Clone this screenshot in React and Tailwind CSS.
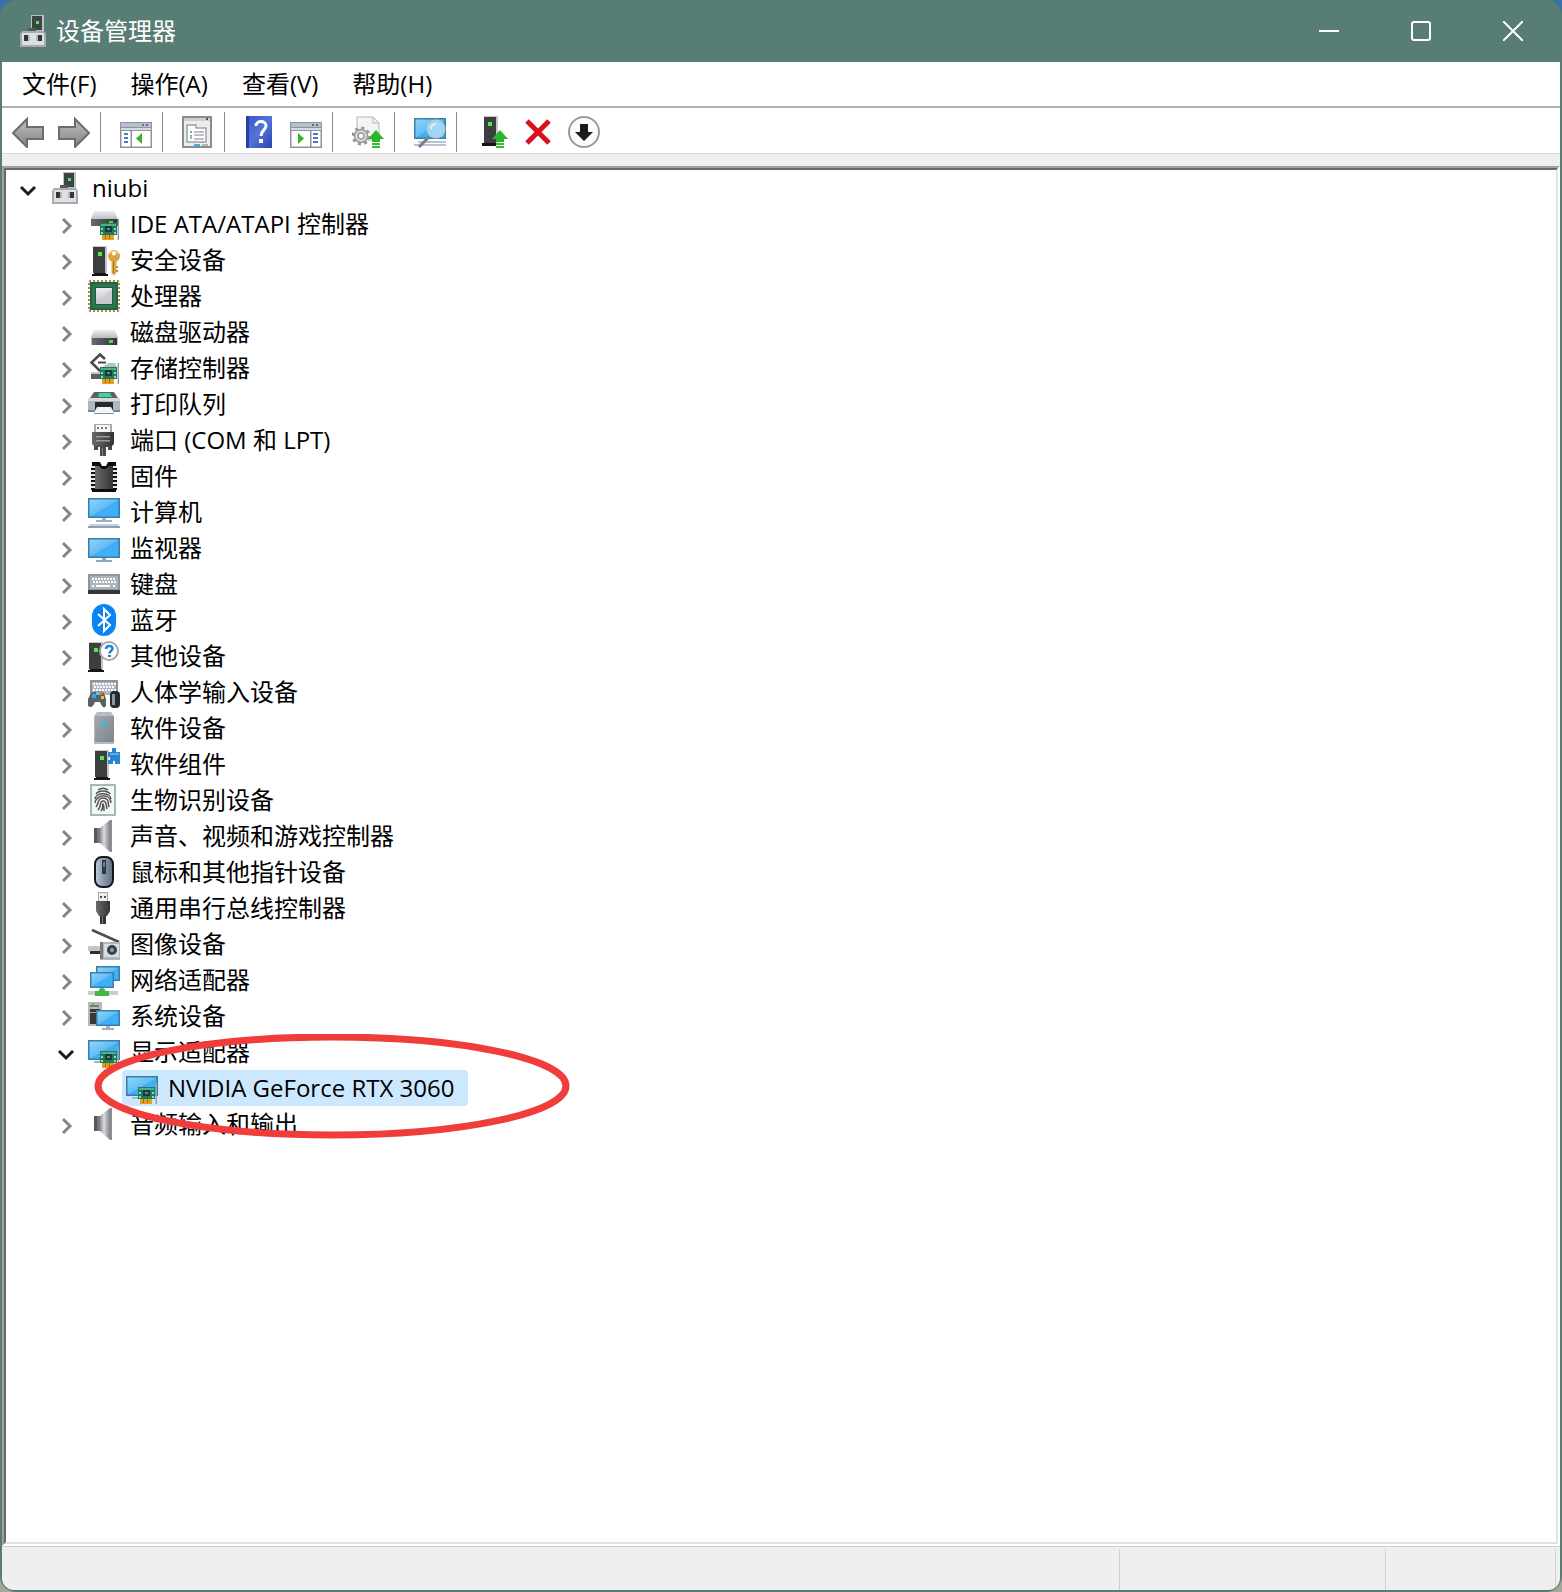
import { useState } from 'react';

const uiFont = "font-['Open_Sans','Noto_Sans_CJK_SC',sans-serif]";

// Gradients shared by all the icons on the page
function IconDefs() {
  return (
    <svg className="absolute size-0" aria-hidden="true">
      <defs>
        <linearGradient id="screen" x1="0" y1="0" x2="1" y2="1">
          <stop offset="0" stopColor="#8fd4fb" />
          <stop offset="0.5" stopColor="#62bdf5" />
          <stop offset="0.52" stopColor="#41aef5" />
          <stop offset="1" stopColor="#3cb2fb" />
        </linearGradient>
        <linearGradient id="metalDown" x1="0" y1="0" x2="0" y2="1">
          <stop offset="0" stopColor="#ededf0" />
          <stop offset="1" stopColor="#bfc0c4" />
        </linearGradient>
        <linearGradient id="dark" x1="0" y1="0" x2="1" y2="0">
          <stop offset="0" stopColor="#6a6a6c" />
          <stop offset="1" stopColor="#343436" />
        </linearGradient>
        <linearGradient id="cone" x1="0" y1="0" x2="1" y2="0">
          <stop offset="0" stopColor="#8d8f94" />
          <stop offset="0.4" stopColor="#d9dade" />
          <stop offset="1" stopColor="#7f8186" />
        </linearGradient>
        <linearGradient id="steel" x1="0" y1="0" x2="1" y2="1">
          <stop offset="0" stopColor="#a3a9b0" />
          <stop offset="1" stopColor="#7d838b" />
        </linearGradient>
        <linearGradient id="mouse" x1="0" y1="0" x2="1" y2="0">
          <stop offset="0" stopColor="#c3ced8" />
          <stop offset="0.5" stopColor="#8798a8" />
          <stop offset="1" stopColor="#5c6d7d" />
        </linearGradient>
        <linearGradient id="arrow" x1="0" y1="0" x2="0" y2="1">
          <stop offset="0" stopColor="#bdbdbd" />
          <stop offset="0.5" stopColor="#a2a2a2" />
          <stop offset="1" stopColor="#838383" />
        </linearGradient>
        <linearGradient id="help" x1="0" y1="0" x2="1" y2="1">
          <stop offset="0" stopColor="#3656c2" />
          <stop offset="0.5" stopColor="#5573d8" />
          <stop offset="1" stopColor="#2743ad" />
        </linearGradient>
      </defs>
    </svg>
  );
}

function Icon({ children }) {
  return (
    <svg className="size-8 shrink-0" viewBox="0 0 32 32" fill="none" aria-hidden="true">
      {children}
    </svg>
  );
}

// Small parts that several icons share

function Card() {
  return (
    <g>
      <path d="M12 15h17v12H12z" fill="#1f7a5c" />
      <path d="M13 16h15v2H13z" fill="#4fae8b" />
      <path d="M17 18h7v6h-7z" fill="#1d3b3a" />
      <path d="M19 20h3v2h-3z" fill="#5d8f8c" />
      <path d="M13 20h2v2h-2zM26 20h2v2h-2zM13 24h2v2h-2zM26 24h2v2h-2z" fill="#8fdcb8" />
      <path d="M14 27h12v5H14z" fill="#e3a01f" />
      <path d="M17 27h1v4h-1zM21 27h1v4h-1z" fill="#a86a0d" />
      <path d="M29.5 11h1.5v21h-1.5z" fill="#9ba1a6" />
    </g>
  );
}

function Screen({ x, y, w, h }) {
  return (
    <g>
      <rect x={x} y={y} width={w} height={h} fill="#3a7ea8" />
      <rect x={x + 1.5} y={y + 1.5} width={w - 3} height={h - 3} fill="url(#screen)" />
    </g>
  );
}

function Tower({ x = 0 }) {
  return (
    <g>
      <path d={`M${x + 1} 2h14v27h-14z`} fill="#c4c5c7" />
      <path d={`M${x + 1} 3h12v26h-12z`} fill="#3d3e40" />
      <path d={`M${x + 2} 29h12v1h2v2h-16v-2h2z`} fill="#141414" />
      <path d={`M${x + 6} 8h4v4h-4z`} fill="#4bee46" />
    </g>
  );
}

function DriveBody() {
  return (
    <g>
      <path d="M6 14h21l3 7H3z" fill="url(#metalDown)" />
      <path d="M3 21h27v8H3z" fill="#c0c1c4" />
      <path d="M4 22h25v7H4z" fill="url(#dark)" />
      <path d="M21 24h4v3h-4z" fill="#44e24a" />
    </g>
  );
}

function KeyDots({ rows, from, to }) {
  const dots = [];
  rows.forEach((y, i) => {
    for (let x = from + (i % 2); x < to; x += 3) dots.push(`M${x} ${y}h2v2h-2z`);
  });
  return <path d={dots.join('')} fill="#fdfdfd" />;
}

function GreenUp() {
  return (
    <g>
      <path d="M24 14l8 9h-4v3h-8v-3h-4z" fill="#2cb52c" />
      <path d="M20 27h8v2h-8zM20 30h8v2h-8z" fill="#2cc22c" />
    </g>
  );
}

function RootIcon() {
  return (
    <Icon>
      <path d="M13 0h13v16H13z" fill="#bfc0c3" />
      <path d="M14 1h10v14H14z" fill="#3b4440" />
      <path d="M18 6h3v3h-3z" fill="#5fe060" />
      <path d="M10 13h8v3h-8z" fill="#55585a" />
      <path d="M4 16h22l2 3v13H2V19z" fill="#a9aaae" />
      <path d="M4 18h22v12H4z" fill="#dedfe3" />
      <path d="M6 20h4v6H6zM20 20h4v6h-4z" fill="#35363a" />
      <path d="M10 20h2v6h-2zM18 20h2v6h-2z" fill="#b7b8bc" />
    </Icon>
  );
}

const icons = {
  ide: (
    <Icon>
      <path d="M6 3h20l4 8H3z" fill="url(#metalDown)" />
      <path d="M3 11h27v7H3z" fill="url(#dark)" />
      <path d="M21 13h4v2h-4z" fill="#44e24a" />
      <Card />
    </Icon>
  ),
  security: (
    <Icon>
      <Tower x={4} />
      <circle cx="26" cy="12" r="6" fill="#d9a441" />
      <path d="M21 10a6 6 0 0 1 10 0" stroke="#f3cf83" strokeWidth="1.500" />
      <circle cx="26" cy="9.500" r="2" fill="#fff" />
      <path d="M23.500 17h5v12l-2.500 2.500-2.500-2.500z" fill="#dca648" />
      <path d="M25 17h1v12h-1z" fill="#a8731c" />
      <path d="M28 22h2v2h-2zM28 26h2v2h-2z" fill="#c08a2b" />
    </Icon>
  ),
  cpu: (
    <Icon>
      <rect x="1" y="1" width="30" height="30" stroke="#b88a2e" strokeWidth="2" strokeDasharray="2 2" />
      <rect x="2" y="2" width="28" height="28" fill="#1d6647" />
      <rect x="4" y="4" width="24" height="24" fill="#2f7355" />
      <rect x="7" y="7" width="18" height="18" fill="#20573f" />
      <rect x="8" y="8" width="16" height="16" fill="url(#metalDown)" />
      <path d="M24 8v16H8z" fill="#c9cacc" opacity="0.700" />
    </Icon>
  ),
  disk: (
    <Icon>
      <DriveBody />
    </Icon>
  ),
  storage: (
    <Icon>
      <path d="M3 20h14v7H3z" fill="#5b5c5f" />
      <path d="M3 20h14v2H3z" fill="#c3c4c6" />
      <path d="M17 7l-5-4.500-8.500 8L12 19" stroke="#47484a" strokeWidth="2.500" />
      <path d="M10 10.500h8" stroke="#47484a" strokeWidth="2" />
      <path d="M13 16l7-5h7l2 5z" fill="#b7c4c2" />
      <Card />
    </Icon>
  ),
  printer: (
    <Icon>
      <path d="M6 4h20l4 6H2z" fill="#5d6166" />
      <path d="M11 5h11l2 4H10z" fill="#3fd3a0" />
      <path d="M0 10h32v14H0z" fill="#aeb7c0" />
      <path d="M0 10h32v3H0z" fill="#d4dbe2" />
      <path d="M0 22h32v2H0z" fill="#7f858c" />
      <path d="M7 14h18v8H7z" fill="#26282b" />
      <path d="M9 19h14l3 6H6z" fill="#f2f3f4" />
      <path d="M6 25h20v1H6z" fill="#8b8f94" />
    </Icon>
  ),
  port: (
    <Icon>
      <path d="M6 0h18v9H6z" fill="#a9a9ab" />
      <path d="M8 1h14v8H8z" fill="#f5f5f6" />
      <path d="M9 3h2v2H9zM13 3h2v2h-2zM17 3h2v2h-2z" fill="#77787a" />
      <path d="M4 8h22v12l-3 3H7l-3-3z" fill="url(#dark)" />
      <path d="M8 12h14v1.500H8zM8 16h14v1.500H8z" fill="#9a9b9d" />
      <path d="M6 22h4v4H6zM20 22h4v4h-4zM12 22h6v10h-6z" fill="#4a4b4d" />
      <path d="M14 24h1v8h-1z" fill="#7c7d7f" />
    </Icon>
  ),
  firmware: (
    <Icon>
      <path d="M4 2h8l2 4h4l2-4h8v30H4z" fill="#0c0c0c" />
      <path d="M7 6h4l3 3h4l3-3h4v23H7z" fill="url(#dark)" />
      <path d="M5 6v24M27 6v24" stroke="#0c0c0c" strokeWidth="4" />
      <path d="M5 6v24M27 6v24" stroke="#e9e9e9" strokeWidth="4" strokeDasharray="2 2" />
    </Icon>
  ),
  computer: (
    <Icon>
      <Screen x={0} y={2} w={32} h={20} />
      <path d="M14 22h4v2h-4zM8 24h16v2H8z" fill="#9fb4c2" />
      <path d="M2 28h28l2 3H0z" fill="#c7cfe0" />
      <path d="M0 30h32v2H0z" fill="#8fa0b5" />
    </Icon>
  ),
  monitor: (
    <Icon>
      <Screen x={0} y={6} w={32} h={20} />
      <path d="M14 26h4v2h-4zM8 28h16v2H8z" fill="#8eaabd" />
    </Icon>
  ),
  keyboard: (
    <Icon>
      <path d="M0 6h32v16H0z" fill="#8e959d" />
      <path d="M2 8h28v13H2z" fill="#acb3bb" />
      <KeyDots rows={[10, 13]} from={4} to={28} />
      <path d="M4 17h2v2H4zM8 17h14v2H8zM25 17h2v2h-2z" fill="#fdfdfd" />
      <path d="M0 22h32v4H0z" fill="#33373d" />
    </Icon>
  ),
  bluetooth: (
    <Icon>
      <rect x="4" y="0" width="24" height="32" rx="12" fill="#0a84f5" />
      <path d="M10 10l12 11-6 6V5l6 6-12 11" stroke="#fff" strokeWidth="2" />
    </Icon>
  ),
  other: (
    <Icon>
      <Tower x={0} />
      <circle cx="21" cy="11" r="9" fill="#fff" stroke="#a5a6a8" strokeWidth="2" />
      <path d="M18 9c0-4 6.500-4 6.500-.5 0 2.500-3 2.500-3 5" stroke="#1b86d1" strokeWidth="2.500" />
      <path d="M20 15h3v2h-3z" fill="#1b86d1" />
    </Icon>
  ),
  hid: (
    <Icon>
      <path d="M2 4h28v15H2z" fill="#8e959d" />
      <path d="M4 6h24v13H4z" fill="#b0b7bf" />
      <KeyDots rows={[7, 10, 13]} from={5} to={27} />
      <path d="M3 17c3-2 11-2 13 0l2 6v7c-2 3-4 1-6-4H7c-2 5-4 6-7 4v-7z" fill="#5a6068" />
      <path d="M4 18h4v4H4z" fill="#3ba4ee" />
      <path d="M8 16h4v3H8z" fill="#58c6f0" />
      <path d="M12 16h3v3h-3z" fill="#e8622c" />
      <path d="M13 20h3v3h-3z" fill="#f2c12e" />
      <rect x="22" y="15" width="10" height="17" rx="4" fill="#26292d" />
      <path d="M24 18h3v11h-3z" fill="#8797a6" />
    </Icon>
  ),
  softwareDevice: (
    <Icon>
      <path d="M9 0h14l3 4H6z" fill="#b9bdc2" />
      <path d="M6 4h20v28H6z" fill="url(#steel)" />
      <path d="M6 4h1v28H6zM6 30h20v2H6z" fill="#b5babf" />
      <path d="M14 10h4v4h-4z" fill="#22c7d6" />
    </Icon>
  ),
  softwareComponent: (
    <Icon>
      <Tower x={6} />
      <path d="M20 4h4V0h4v4h4v12h-5v-3h-2v3h-5v-4h2V9h-2z" fill="#2a86cf" />
      <path d="M22 5h9v2h-9z" fill="#5badea" />
    </Icon>
  ),
  biometric: (
    <Icon>
      <rect x="3" y="1" width="24" height="30" fill="#f3f7f5" stroke="#a3bab1" strokeWidth="2" />
      <g stroke="#4f5452" strokeWidth="1.500">
        <path d="M10 6c3-2 7-2 10 0M8 10c3-4 11-4 14 0M7 15c1-7 15-7 16 0M7 19c1-9 15-10 16 0M8 23c3-3 1-9 7-9s5 5 6 9M10 26c4-4 1-9 5-9s3 5 4 8M13 27c3-3 1-7 2-7s1 3 1 7" />
      </g>
    </Icon>
  ),
  speaker: (
    <Icon>
      <path d="M6 8h7v15H6z" fill="#77797e" />
      <path d="M6 8h3v15H6z" fill="#54565b" />
      <path d="M12 8L22 0v32l-10-9z" fill="url(#cone)" />
      <path d="M22 0h2v32h-2z" fill="#8b8d92" />
    </Icon>
  ),
  mouse: (
    <Icon>
      <rect x="7" y="1" width="18" height="30" rx="7" fill="url(#mouse)" stroke="#15181b" strokeWidth="2" />
      <path d="M14 4h4v14h-4z" fill="#2c3a48" />
      <path d="M15 6h2v5h-2z" fill="#6f8294" />
    </Icon>
  ),
  usb: (
    <Icon>
      <path d="M10 0h10v9H10z" fill="#a6a7a9" />
      <path d="M11 1h8v8h-8z" fill="#ededee" />
      <path d="M12 4h2v2h-2zM16 4h2v2h-2z" fill="#4d4e50" />
      <path d="M8 9h14v10l-3 5h-8l-3-5z" fill="url(#dark)" />
      <path d="M12 24h6v8h-6z" fill="#333436" />
      <path d="M14 24h1v8h-1z" fill="#77787a" />
    </Icon>
  ),
  imaging: (
    <Icon>
      <path d="M4 2l27 12" stroke="#4d4e50" strokeWidth="2.500" />
      <path d="M0 18h12v5H0z" fill="#c5c6c8" />
      <path d="M2 23h10v3H2z" fill="#2f3032" />
      <path d="M12 14h20v18H12z" fill="#b4b5b7" />
      <path d="M12 14h3v17h-3z" fill="#77787a" />
      <path d="M16 16h15v13H16z" fill="#dcdddf" />
      <circle cx="24" cy="22" r="5" fill="#35414d" />
      <circle cx="24" cy="22" r="2" fill="#86a3bd" />
    </Icon>
  ),
  network: (
    <Icon>
      <Screen x={8} y={2} w={24} h={15} />
      <path d="M12 24h4v3h-4z" fill="#8eaabd" />
      <Screen x={2} y={8} w={24} h={16} />
      <path d="M0 27h30v4H0z" fill="#c9cecb" />
      <path d="M11 25h6v2h4v5H7v-5h4z" fill="#3fb944" />
    </Icon>
  ),
  system: (
    <Icon>
      <path d="M0 2h14v24H0z" fill="#b7b9b6" />
      <path d="M2 9h10v15H2z" fill="#36383a" />
      <path d="M2 5h9v2H2z" fill="#77797b" />
      <path d="M4 3h2v2H4z" fill="#54c458" />
      <path d="M2 12h6v1H2z" fill="#9b9d9f" />
      <Screen x={8} y={10} w={24} h={16} />
      <path d="M18 26h4v2h-4zM14 28h12v2H14z" fill="#a4b0cc" />
    </Icon>
  ),
  display: (
    <Icon>
      <Screen x={0} y={4} w={32} h={20} />
      <path d="M6 25h6v2H6z" fill="#a9b7c2" />
      <Card />
    </Icon>
  ),
};

const devices = [
  { name: 'IDE ATA/ATAPI 控制器', icon: 'ide' },
  { name: '安全设备', icon: 'security' },
  { name: '处理器', icon: 'cpu' },
  { name: '磁盘驱动器', icon: 'disk' },
  { name: '存储控制器', icon: 'storage' },
  { name: '打印队列', icon: 'printer' },
  { name: '端口 (COM 和 LPT)', icon: 'port' },
  { name: '固件', icon: 'firmware' },
  { name: '计算机', icon: 'computer' },
  { name: '监视器', icon: 'monitor' },
  { name: '键盘', icon: 'keyboard' },
  { name: '蓝牙', icon: 'bluetooth' },
  { name: '其他设备', icon: 'other' },
  { name: '人体学输入设备', icon: 'hid' },
  { name: '软件设备', icon: 'softwareDevice' },
  { name: '软件组件', icon: 'softwareComponent' },
  { name: '生物识别设备', icon: 'biometric' },
  { name: '声音、视频和游戏控制器', icon: 'speaker' },
  { name: '鼠标和其他指针设备', icon: 'mouse' },
  { name: '通用串行总线控制器', icon: 'usb' },
  { name: '图像设备', icon: 'imaging' },
  { name: '网络适配器', icon: 'network' },
  { name: '系统设备', icon: 'system' },
  { name: '显示适配器', icon: 'display', children: ['NVIDIA GeForce RTX 3060'] },
  { name: '音频输入和输出', icon: 'speaker' },
];

function Chevron({ open, onClick, label }) {
  return (
    <button type="button" aria-label={label} aria-expanded={open} onClick={onClick} className="size-4 shrink-0">
      <svg className="size-4 overflow-visible" viewBox="0 0 16 16" fill="none" aria-hidden="true">
        {open ? (
          <path d="M1 7l7 7 7-7" stroke="#1c1c1c" strokeWidth="3" />
        ) : (
          <path d="M5 3l7 7-7 7" stroke="#868686" strokeWidth="3" />
        )}
      </svg>
    </button>
  );
}

function DeviceRow({ device }) {
  const [open, setOpen] = useState(Boolean(device.children));

  return (
    <li>
      <div className="flex h-9 items-center">
        <Chevron open={open} onClick={() => setOpen(!open)} label={device.name} />
        <div className="ml-3.5 flex items-center gap-2.5">
          {icons[device.icon]}
          <span>{device.name}</span>
        </div>
      </div>
      {open && device.children && (
        <ul className="pl-16">
          {device.children.map((child) => (
            <li key={child} className="relative flex">
              <div className="flex h-9 items-center gap-2.5 rounded-sm bg-[#cce8ff] pr-3.5 pl-1">
                {icons.display}
                <span>{child}</span>
              </div>
              {/* hand-drawn style marker round the graphics card */}
              <svg
                className="pointer-events-none absolute -top-9 -left-7 h-27 w-120"
                viewBox="0 0 480 108"
                fill="none"
                aria-hidden="true"
              >
                <ellipse cx="238" cy="52" rx="234" ry="49" stroke="#f13c3c" strokeWidth="7" />
              </svg>
            </li>
          ))}
        </ul>
      )}
    </li>
  );
}

function ToolButton({ label, children }) {
  return (
    <button type="button" aria-label={label} title={label} className="flex h-full w-[46px] items-center justify-center">
      <Icon>{children}</Icon>
    </button>
  );
}

function Separator() {
  return <div className="mr-3 ml-[3px] h-10 w-px bg-[#8c8c8c]" />;
}

function PaneWindow({ flip }) {
  return (
    <g>
      <path d="M0 6h32v26H0z" fill="#8e939c" />
      <path d="M1 7h30v4H1z" fill="#b4bfd0" />
      <path d="M22 8h2v2h-2zM26 8h2v2h-2z" fill="#5f6d85" />
      <path d="M1 12h30v2H1z" fill="#d5dbe4" />
      <path d="M1.500 15h29v15.500h-29z" fill="#fff" />
      {flip ? (
        <g>
          <path d="M20 15h1.500v16H20z" fill="#8e939c" />
          <path d="M23 18h5M23 22h5M23 26h5" stroke="#4a79c4" strokeWidth="2" />
          <path d="M8 17l6 5.500-6 5.500z" fill="#39b51f" />
        </g>
      ) : (
        <g>
          <path d="M10.500 15H12v16h-1.500z" fill="#8e939c" />
          <path d="M4 18h4M4 22h4M4 26h4" stroke="#4a79c4" strokeWidth="2" />
          <path d="M22 17l-6 5.500 6 5.500z" fill="#39b51f" />
        </g>
      )}
    </g>
  );
}

function Toolbar() {
  return (
    <div className="flex h-[46px] items-center border-b border-[#d9d9d9] bg-white pt-[3px] pl-[3px]">
      <ToolButton label="后退">
        <path d="M1 17L15 3v8h16v12H15v8z" fill="url(#arrow)" stroke="#6d6d6d" strokeWidth="2" />
      </ToolButton>
      <ToolButton label="前进">
        <path d="M31 17L17 3v8H1v12h16v8z" fill="url(#arrow)" stroke="#6d6d6d" strokeWidth="2" />
      </ToolButton>
      <Separator />
      <ToolButton label="显示/隐藏控制台树">
        <PaneWindow />
      </ToolButton>
      <Separator />
      <ToolButton label="属性">
        <rect x="1" y="1" width="28" height="30" fill="#eceded" stroke="#8b8b8e" strokeWidth="2" />
        <path d="M2 2h26v3H2z" fill="#cfd0d3" />
        <path d="M24 2h2v2h-2z" fill="#555" />
        <path d="M5 9h9v3h10v14H5z" fill="#fff" stroke="#9da1a8" strokeWidth="1.500" />
        <path d="M12 16h10M12 19h10M12 23h10" stroke="#a7abb0" strokeWidth="1.500" />
        <path d="M8 15h2v2H8z" fill="#4ec0a2" />
        <path d="M8 19h2v4H8z" fill="#a7abb0" />
        <path d="M12 28h6v2h-6z" fill="#2db9e0" />
        <path d="M20 28h6v2h-6z" fill="#b2b5b8" />
      </ToolButton>
      <Separator />
      <ToolButton label="帮助">
        <path d="M2 0h26v32H2z" fill="url(#help)" />
        <path d="M2 0h3v32H2z" fill="#2440a4" />
        <path d="M12 10c0-6 10-6 10 0 0 4-5 4-5 10" stroke="#fff" strokeWidth="3" />
        <path d="M15 23h4v4h-4z" fill="#fff" />
      </ToolButton>
      <ToolButton label="显示/隐藏操作窗格">
        <PaneWindow flip />
      </ToolButton>
      <Separator />
      <ToolButton label="更新驱动程序">
        <path d="M5 1h16l6 6v17H5z" fill="#f4f4f5" stroke="#b5b5b7" />
        <path d="M21 1v6h6" stroke="#b5b5b7" />
        <circle cx="9" cy="20" r="8" stroke="#97999c" strokeWidth="3" strokeDasharray="3 3.280" />
        <circle cx="9" cy="20" r="6.500" fill="#dcdddf" stroke="#97999c" strokeWidth="1.500" />
        <circle cx="9" cy="20" r="3" fill="#fff" stroke="#97999c" strokeWidth="1.500" />
        <GreenUp />
      </ToolButton>
      <Separator />
      <ToolButton label="扫描检测硬件改动">
        <Screen x={0} y={2} w={32} h={21} />
        <path d="M4 25h28v2H4zM0 28h32v2H0z" fill="#b9c2d2" />
        <path d="M15 21L5 31" stroke="#77818c" strokeWidth="3" />
        <circle cx="22" cy="13" r="8.500" fill="#9ed7f7" stroke="#b8cad6" strokeWidth="2" />
        <path d="M17 13c0-3 2-5 5-5" stroke="#dff3fd" strokeWidth="2" />
      </ToolButton>
      <Separator />
      <ToolButton label="启用设备">
        <path d="M8 0h14v28H8z" fill="#c4c5c7" />
        <path d="M8 1h12v26H8z" fill="#3d3e40" />
        <path d="M6 27h14v3H6z" fill="#141414" />
        <path d="M12 6h4v4h-4z" fill="#4bee46" />
        <GreenUp />
      </ToolButton>
      <ToolButton label="卸载设备">
        <path d="M5 5l22 22M27 5L5 27" stroke="#d9101d" strokeWidth="5" />
      </ToolButton>
      <ToolButton label="禁用设备">
        <circle cx="16" cy="16" r="15" fill="#fbfbfb" stroke="#9b9b9b" strokeWidth="2" />
        <path d="M12 8h8v8h5l-9 9-9-9h5z" fill="#1b1b1b" />
      </ToolButton>
    </div>
  );
}

export default function App() {
  const [open, setOpen] = useState(true);

  return (
    <div className="min-h-screen bg-linear-to-b from-[#3674a8] from-50% to-[#a3a89b] to-50%">
      <IconDefs />
      <div
        className={`${uiFont} flex min-h-screen flex-col rounded-2xl bg-[#587d74] px-0.5 pb-0.5 text-2xl leading-9 text-black`}
      >
        <header className="flex h-[62px] items-center text-white">
          <div className="ml-4 flex items-center gap-1.5">
            <RootIcon />
            <h1 className="font-normal">设备管理器</h1>
          </div>
          <div className="mr-px ml-auto flex h-15">
            <button type="button" aria-label="最小化" className="flex w-[92px] items-center justify-center">
              <svg className="size-5" viewBox="0 0 20 20" fill="none" aria-hidden="true">
                <path d="M0 10h20" stroke="#fff" strokeWidth="2" />
              </svg>
            </button>
            <button type="button" aria-label="最大化" className="flex w-[92px] items-center justify-center">
              <svg className="size-5" viewBox="0 0 20 20" fill="none" aria-hidden="true">
                <rect x="1" y="1" width="18" height="18" rx="2" stroke="#fff" strokeWidth="2" />
              </svg>
            </button>
            <button type="button" aria-label="关闭" className="flex w-[92px] items-center justify-center">
              <svg className="size-5" viewBox="0 0 20 20" fill="none" aria-hidden="true">
                <path d="M0 0l20 20M20 0L0 20" stroke="#fff" strokeWidth="2" />
              </svg>
            </button>
          </div>
        </header>

        <div className="flex flex-1 flex-col overflow-hidden rounded-b-xl bg-[#efefef]">
          <nav className="flex h-[46px] items-center gap-0.5 border-b-2 border-[#b0b0b0] bg-white pl-1">
            {['文件(F)', '操作(A)', '查看(V)', '帮助(H)'].map((item) => (
              <button key={item} type="button" className="px-4">
                {item}
              </button>
            ))}
          </nav>

          <Toolbar />

          <main className="mt-3 flex flex-1 flex-col border-2 border-t-[#a0a0a0] border-r-white border-b-white border-l-[#a0a0a0]">
            <div className="flex-1 border-2 border-t-[#696969] border-r-[#e3e3e3] border-b-[#e3e3e3] border-l-[#696969] bg-white pl-3.5">
              <div className="flex h-9 items-center">
                <Chevron open={open} onClick={() => setOpen(!open)} label="niubi" />
                <div className="ml-3.5 flex items-center gap-2.5">
                  <RootIcon />
                  <span>niubi</span>
                </div>
              </div>
              {open && (
                <ul className="pl-[38px]">
                  {devices.map((device) => (
                    <DeviceRow key={device.name} device={device} />
                  ))}
                </ul>
              )}
            </div>
          </main>

          <footer className="flex h-11 border-t border-[#d0d0d0] pt-0.5 pr-1">
            <div className="flex-1 border-r border-[#d0d0d0]" />
            <div className="w-[266px] border-r border-[#d0d0d0]" />
            <div className="w-[170px] border-r border-[#d0d0d0]" />
          </footer>
        </div>
      </div>
    </div>
  );
}
